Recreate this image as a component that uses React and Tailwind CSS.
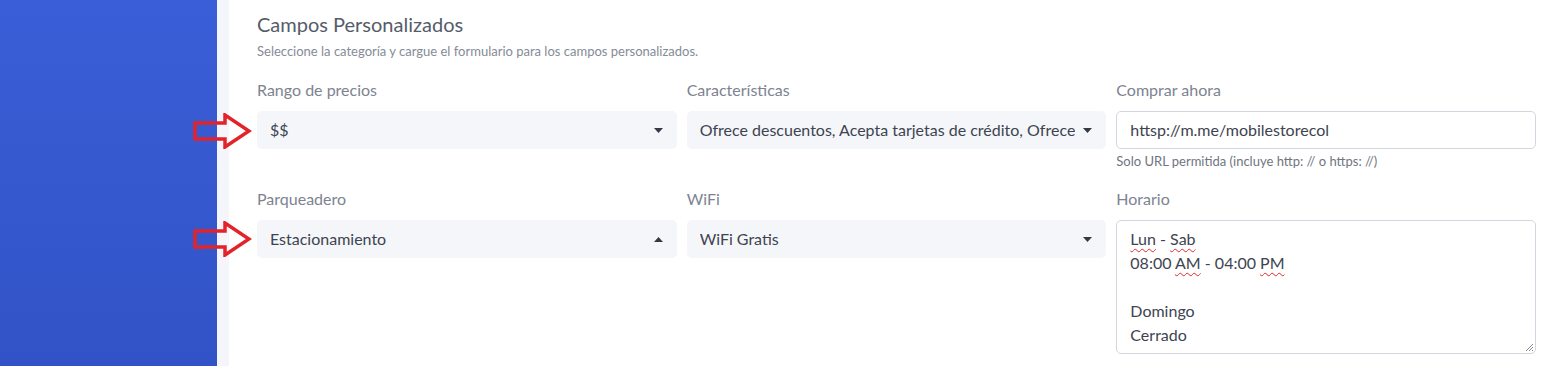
const font = { fontFamily: 'Lato, "Open Sans", sans-serif' }

function Caret({ up }) {
  return (
    <svg width="9" height="5" viewBox="0 0 9 5" className="shrink-0">
      {up ? <path d="M0 5 L4.5 0 L9 5 Z" fill="#333a45" /> : <path d="M0 0 L9 0 L4.5 5 Z" fill="#333a45" />}
    </svg>
  )
}

function Arrow({ className }) {
  return (
    <svg width="60" height="36" viewBox="0 0 60 36" className={className}>
      <path
        d="M3 10 L33 10 L33 2 L57 18 L33 34 L33 26 L3 26 Z"
        fill="none"
        stroke="#e3232a"
        strokeWidth="3.5"
        strokeLinejoin="miter"
      />
    </svg>
  )
}

function Select({ value, up }) {
  return (
    <div className="h-[38px] rounded-[5px] bg-[#f5f6fa] pl-[13px] pr-[14px] flex items-center justify-between gap-[6px] text-[16px] text-[#3d4450]">
      <span className="whitespace-nowrap overflow-hidden">{value}</span>
      <Caret up={up} />
    </div>
  )
}

function Field({ label, children }) {
  return (
    <div className="flex flex-col">
      <label className="text-[16px] text-[#7d8391] leading-[20px] mb-[11px]">{label}</label>
      {children}
    </div>
  )
}

const wavy = 'underline decoration-wavy decoration-[#e0282e] decoration-1 underline-offset-[3px]'

export default function App() {
  return (
    <div className="relative flex h-[366px] w-[1562px] overflow-hidden bg-white" style={font}>
      <div className="w-[217px] shrink-0 bg-gradient-to-b from-[#3a5ed7] to-[#3253c7]" />
      <div className="w-[12px] shrink-0 bg-[#f4f6fb]" />
      <div className="flex-1 pl-[28px] pr-[26px] pt-[10px]">
        <h2 className="text-[20px] text-[#555c69] leading-[28px]">Campos Personalizados</h2>
        <p className="text-[13px] text-[#858b97] mt-[4px] leading-[18px]">
          Seleccione la categoría y cargue el formulario para los campos personalizados.
        </p>

        <div className="mt-[20px] grid grid-cols-3 gap-x-[10px]">
          <Field label="Rango de precios">
            <Select value="$$" />
          </Field>
          <Field label="Características">
            <Select value="Ofrece descuentos, Acepta tarjetas de crédito, Ofrece" />
          </Field>
          <Field label="Comprar ahora">
            <div className="h-[38px] rounded-[5px] border border-[#d3d6de] bg-white px-[13px] flex items-center text-[16px] text-[#3d4450]">
              httsp://m.me/mobilestorecol
            </div>
            <p className="text-[13px] text-[#6f7581] mt-[3px] leading-[18px]">
              Solo URL permitida (incluye http: // o https: //)
            </p>
          </Field>
        </div>

        <div className="mt-[19px] grid grid-cols-3 gap-x-[10px]">
          <Field label="Parqueadero">
            <Select value="Estacionamiento" up />
          </Field>
          <Field label="WiFi">
            <Select value="WiFi Gratis" />
          </Field>
          <Field label="Horario">
            <div className="relative h-[134px] rounded-[5px] border border-[#d3d6de] bg-white px-[13px] pt-[6px] text-[16px] leading-[24px] text-[#3d4450]">
              <div><span className={wavy}>Lun</span> - <span className={wavy}>Sab</span></div>
              <div>08:00 <span className={wavy}>AM</span> - 04:00 <span className={wavy}>PM</span></div>
              <div>&nbsp;</div>
              <div>Domingo</div>
              <div>Cerrado</div>
              <svg width="8" height="8" viewBox="0 0 8 8" className="absolute right-[2px] bottom-[2px]">
                <path d="M8 1 L1 8 M8 4 L4 8 M8 7 L7 8" stroke="#8a8a8a" strokeWidth="1" />
              </svg>
            </div>
          </Field>
        </div>
      </div>

      <Arrow className="absolute left-[192px] top-[113px]" />
      <Arrow className="absolute left-[192px] top-[221px]" />
    </div>
  )
}
